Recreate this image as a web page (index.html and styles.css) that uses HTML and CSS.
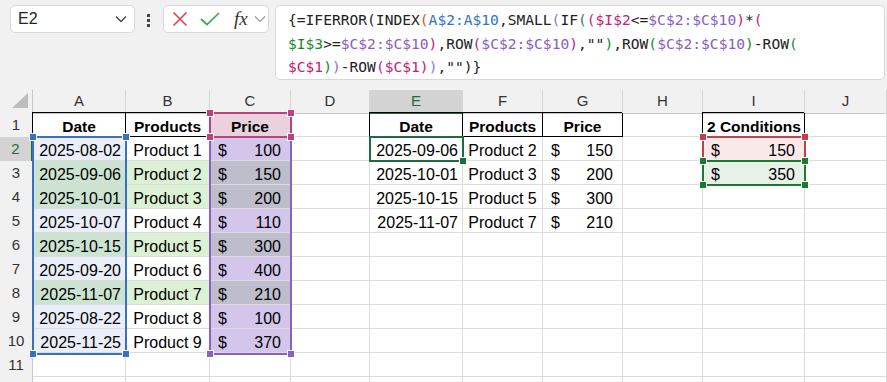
FILE: index.html
```html
<!DOCTYPE html>
<html lang="en">

<head>
    <meta charset="UTF-8">
    <meta name="viewport" content="width=device-width, initial-scale=1.0">
    <title>IFERROR INDEX SMALL - 2 Conditions</title>
    <link rel="stylesheet" href="styles.css">
</head>

<body>
    <!-- formula bar -->
    <div class="bar">
        <div class="namebox">
            <span>E2</span>
            <svg class="chev" width="12" height="8" viewBox="0 0 12 8"><path d="M1 1.5 6 6.5 11 1.5" fill="none" stroke="#444" stroke-width="1.3"/></svg>
        </div>
        <div class="dots"><i></i><i></i><i></i></div>
        <div class="cmds">
            <svg width="16" height="16" viewBox="0 0 16 16"><path d="M1.5 1.5 14.5 14.5M14.5 1.5 1.5 14.5" stroke="#e0454b" stroke-width="1.6"/></svg>
            <svg width="20" height="14" viewBox="0 0 20 14"><path d="M1 7 7 12.5 19 1" fill="none" stroke="#3ea553" stroke-width="1.7"/></svg>
            <span class="fx">fx</span>
            <svg width="12" height="8" viewBox="0 0 12 8"><path d="M1 1.5 6 6.5 11 1.5" fill="none" stroke="#999" stroke-width="1.2"/></svg>
        </div>
        <div class="formula">
            <div class="fl">{=IFERROR(INDEX<span class="k-o">(</span><span class="k-b">A$2:A$10</span>,SMALL<span class="k-l">(</span>IF<span class="k-g">(</span><span class="k-m">(</span><span class="k-m">$I$2</span>&lt;=<span class="k-p">$C$2:$C$10</span><span class="k-m">)</span>*<span class="k-m">(</span></div>
            <div class="fl"><span class="k-g">$I$3</span>&gt;=<span class="k-p">$C$2:$C$10</span><span class="k-m">)</span>,ROW<span class="k-m">(</span><span class="k-p">$C$2:$C$10</span><span class="k-m">)</span>,""<span class="k-g">)</span>,ROW<span class="k-g">(</span><span class="k-p">$C$2:$C$10</span><span class="k-g">)</span>-ROW<span class="k-g">(</span></div>
            <div class="fl"><span class="k-m">$C$1</span><span class="k-g">)</span><span class="k-l">)</span>-ROW<span class="k-m">(</span><span class="k-m">$C$1</span><span class="k-m">)</span><span class="k-l">)</span>,"")}</div>
        </div>
    </div>

    <!-- sheet -->
    <div class="sheet">
        <div class="row head">
            <div class="corner"><svg width="17" height="16" viewBox="0 0 17 16"><path d="M16 0V15H0Z" fill="#bdbdbd"/></svg></div>
            <div class="ch">A</div><div class="ch">B</div><div class="ch">C</div><div class="ch">D</div>
            <div class="ch on">E</div><div class="ch">F</div><div class="ch">G</div><div class="ch">H</div>
            <div class="ch">I</div><div class="ch">J</div><div class="ch"></div>
        </div>

        <div class="row">
            <div class="rh">1</div>
            <div class="c th">Date</div><div class="c th">Products</div><div class="c th pink">Price</div><div class="c"></div>
            <div class="c th">Date</div><div class="c th">Products</div><div class="c th">Price</div><div class="c"></div>
            <div class="c th">2 Conditions</div><div class="c"></div><div class="c"></div>
        </div>

        <div class="row">
            <div class="rh on">2</div>
            <div class="c num blue">2025-08-02</div><div class="c mid">Product 1</div><div class="c money lav"><span>$</span><span>100</span></div><div class="c"></div>
            <div class="c num">2025-09-06</div><div class="c mid">Product 2</div><div class="c money"><span>$</span><span>150</span></div><div class="c"></div>
            <div class="c money rose"><span>$</span><span>150</span></div><div class="c"></div><div class="c"></div>
        </div>

        <div class="row">
            <div class="rh">3</div>
            <div class="c num teal">2025-09-06</div><div class="c mid mint">Product 2</div><div class="c money slate"><span>$</span><span>150</span></div><div class="c"></div>
            <div class="c num">2025-10-01</div><div class="c mid">Product 3</div><div class="c money"><span>$</span><span>200</span></div><div class="c"></div>
            <div class="c money sage"><span>$</span><span>350</span></div><div class="c"></div><div class="c"></div>
        </div>

        <div class="row">
            <div class="rh">4</div>
            <div class="c num teal">2025-10-01</div><div class="c mid mint">Product 3</div><div class="c money slate"><span>$</span><span>200</span></div><div class="c"></div>
            <div class="c num">2025-10-15</div><div class="c mid">Product 5</div><div class="c money"><span>$</span><span>300</span></div><div class="c"></div>
            <div class="c"></div><div class="c"></div><div class="c"></div>
        </div>

        <div class="row">
            <div class="rh">5</div>
            <div class="c num blue">2025-10-07</div><div class="c mid">Product 4</div><div class="c money lav"><span>$</span><span>110</span></div><div class="c"></div>
            <div class="c num">2025-11-07</div><div class="c mid">Product 7</div><div class="c money"><span>$</span><span>210</span></div><div class="c"></div>
            <div class="c"></div><div class="c"></div><div class="c"></div>
        </div>

        <div class="row">
            <div class="rh">6</div>
            <div class="c num teal">2025-10-15</div><div class="c mid mint">Product 5</div><div class="c money slate"><span>$</span><span>300</span></div><div class="c"></div>
            <div class="c"></div><div class="c"></div><div class="c"></div><div class="c"></div>
            <div class="c"></div><div class="c"></div><div class="c"></div>
        </div>

        <div class="row">
            <div class="rh">7</div>
            <div class="c num blue">2025-09-20</div><div class="c mid">Product 6</div><div class="c money lav"><span>$</span><span>400</span></div><div class="c"></div>
            <div class="c"></div><div class="c"></div><div class="c"></div><div class="c"></div>
            <div class="c"></div><div class="c"></div><div class="c"></div>
        </div>

        <div class="row">
            <div class="rh">8</div>
            <div class="c num teal">2025-11-07</div><div class="c mid mint">Product 7</div><div class="c money slate"><span>$</span><span>210</span></div><div class="c"></div>
            <div class="c"></div><div class="c"></div><div class="c"></div><div class="c"></div>
            <div class="c"></div><div class="c"></div><div class="c"></div>
        </div>

        <div class="row">
            <div class="rh">9</div>
            <div class="c num blue">2025-08-22</div><div class="c mid">Product 8</div><div class="c money lav"><span>$</span><span>100</span></div><div class="c"></div>
            <div class="c"></div><div class="c"></div><div class="c"></div><div class="c"></div>
            <div class="c"></div><div class="c"></div><div class="c"></div>
        </div>

        <div class="row">
            <div class="rh">10</div>
            <div class="c num blue">2025-11-25</div><div class="c mid">Product 9</div><div class="c money lav"><span>$</span><span>370</span></div><div class="c"></div>
            <div class="c"></div><div class="c"></div><div class="c"></div><div class="c"></div>
            <div class="c"></div><div class="c"></div><div class="c"></div>
        </div>

        <div class="row">
            <div class="rh">11</div>
            <div class="c"></div><div class="c"></div><div class="c"></div><div class="c"></div>
            <div class="c"></div><div class="c"></div><div class="c"></div><div class="c"></div>
            <div class="c"></div><div class="c"></div><div class="c"></div>
        </div>

        <div class="row">
            <div class="rh"></div>
            <div class="c"></div><div class="c"></div><div class="c"></div><div class="c"></div>
            <div class="c"></div><div class="c"></div><div class="c"></div><div class="c"></div>
            <div class="c"></div><div class="c"></div><div class="c"></div>
        </div>

        <!-- range highlights drawn over the cells -->
        <div class="range r-date"><i class="h tl"></i><i class="h tr"></i><i class="h bl"></i><i class="h br"></i></div>
        <div class="range r-price"><i class="h tl"></i><i class="h tr"></i><i class="h bl"></i><i class="h br"></i></div>
        <div class="range r-phead"><i class="h tl"></i><i class="h tr"></i><i class="h bl"></i><i class="h br"></i></div>
        <div class="range r-i2"><i class="h tl"></i><i class="h tr"></i><i class="h bl"></i><i class="h br"></i></div>
        <div class="range r-i3"><i class="h tl"></i><i class="h tr"></i><i class="h bl"></i><i class="h br"></i></div>
        <div class="range active"><i class="h br"></i></div>
    </div>
</body>

</html>
```

FILE: styles.css
```css
* {
    margin: 0;
    padding: 0;
    box-sizing: border-box;
}

body {
    width: 887px;
    height: 382px;
    overflow: hidden;
    background: #f1f1f1;
    font-family: "Liberation Sans", Arial, sans-serif;
    color: #000;
}

/* ---------- formula bar ---------- */

.bar {
    display: flex;
    align-items: flex-start;
    height: 90px;
    padding: 5px 2px 0 10px;
}

.namebox {
    display: flex;
    align-items: center;
    justify-content: space-between;
    width: 125px;
    height: 28px;
    padding: 0 7px 0 7px;
    background: #fff;
    border: 1px solid #d8d8d8;
    border-radius: 5px;
    font-size: 16px;
    color: #222;
}

.dots {
    display: flex;
    flex-direction: column;
    gap: 2px;
    width: 5px;
    margin: 9px 11px 0 12px;
}

.dots i {
    display: block;
    width: 3px;
    height: 3px;
    background: #444;
}

.cmds {
    display: flex;
    align-items: center;
    width: 106px;
    height: 28px;
    padding: 0 0 0 8px;
    background: #fff;
    border: 1px solid #d8d8d8;
    border-radius: 5px;
}

.cmds svg:nth-child(2) {
    margin-left: 12px;
}

.fx {
    margin-left: 14px;
    font-family: "Liberation Serif", "Times New Roman", serif;
    font-style: italic;
    font-size: 19px;
    color: #333;
    line-height: 20px;
}

.cmds svg:last-child {
    margin-left: 6px;
}

.formula {
    flex: 1;
    height: 75px;
    margin-left: 6px;
    padding: 2px 0 0 12px;
    background: #fff;
    border: 1px solid #d8d8d8;
    border-radius: 5px;
    font-family: "DejaVu Sans Mono", "Liberation Mono", monospace;
    font-size: 14.6px;
    line-height: 23.5px;
    color: #222;
}

.fl {
    white-space: nowrap;
}

.k-o { color: #c65b1f; }
.k-b { color: #2e75c6; }
.k-l { color: #9077c8; }
.k-g { color: #178a2f; }
.k-m { color: #c2227a; }
.k-p { color: #8a5ec2; }

/* ---------- sheet ---------- */

.sheet {
    position: relative;
    background: #fff;
}

.row {
    display: grid;
    grid-template-columns: 33px 93px 84px 81px 79px 93px 80px 80px 80px 102px 82px;
    height: 24px;
}

.row.head {
    height: 23px;
}

.corner {
    display: flex;
    align-items: flex-end;
    justify-content: flex-end;
    padding: 0 3px 4px 0;
    background: #f1f1f1;
    border-right: 1px solid #c8c8c8;
    border-bottom: 1px solid #c8c8c8;
}

.ch {
    background: #f1f1f1;
    border-right: 1px solid #d6d6d6;
    border-bottom: 1px solid #c8c8c8;
    text-align: center;
    font-size: 15px;
    line-height: 22px;
    color: #333;
}

.ch.on {
    background: #d3d3d3;
    color: #1e6b40;
    border-bottom: 2px solid #1e6b40;
}

.rh {
    background: #f1f1f1;
    border-right: 1px solid #c8c8c8;
    border-bottom: 1px solid #d6d6d6;
    text-align: center;
    font-size: 15px;
    line-height: 24px;
    color: #333;
}

.rh.on {
    background: #d3d3d3;
    color: #1e6b40;
    border-right: 2px solid #1e6b40;
}

.c {
    height: 24px;
    padding: 4px 4px 0 4px;
    border-right: 1px solid #dcdcdc;
    border-bottom: 1px solid #dcdcdc;
    font-size: 16px;
    line-height: 20px;
    white-space: nowrap;
}

.th {
    text-align: center;
    font-weight: bold;
    font-size: 15.5px;
    border-right: 1px solid #000;
    border-bottom: 1px solid #000;
    box-shadow: -1px -1px 0 #000;
}

.num {
    text-align: right;
}

.mid {
    text-align: center;
    padding: 4px 0 0 0;
}

.money {
    display: flex;
    justify-content: space-between;
    padding: 4px 9px 0 8px;
}

/* cell fills */
.blue { background: #e9eef8; }
.teal { background: #cce3d2; }
.mint { background: #dcf0d4; }
.lav { background: #d4c6ea; }
.slate { background: #bdbdcb; }
.pink { background: #e9d1de; }
.rose { background: #f9e9e9; }
.sage { background: #e6f1e7; }

/* ---------- range outlines ---------- */

.range {
    position: absolute;
    border: 2px solid;
}

.h {
    position: absolute;
    width: 6px;
    height: 6px;
    background: currentColor;
    outline: 1px solid #fff;
}

.tl { left: -4px; top: -4px; }
.tr { right: -4px; top: -4px; }
.bl { left: -4px; bottom: -4px; }
.br { right: -4px; bottom: -4px; }

.r-date {
    left: 32px;
    top: 46px;
    width: 95px;
    height: 219px;
    color: #3a6fc6;
}

.r-price {
    left: 209px;
    top: 46px;
    width: 83px;
    height: 219px;
    color: #8c60c0;
}

.r-phead {
    left: 209px;
    top: 22px;
    width: 83px;
    height: 26px;
    color: #b8437f;
}

.r-i2 {
    left: 702px;
    top: 46px;
    width: 104px;
    height: 26px;
    color: #c0414b;
}

.r-i3 {
    left: 702px;
    top: 70px;
    width: 104px;
    height: 26px;
    color: #1b7a2f;
}

.active {
    left: 369px;
    top: 46px;
    width: 95px;
    height: 26px;
    color: #1e6b40;
}
```
